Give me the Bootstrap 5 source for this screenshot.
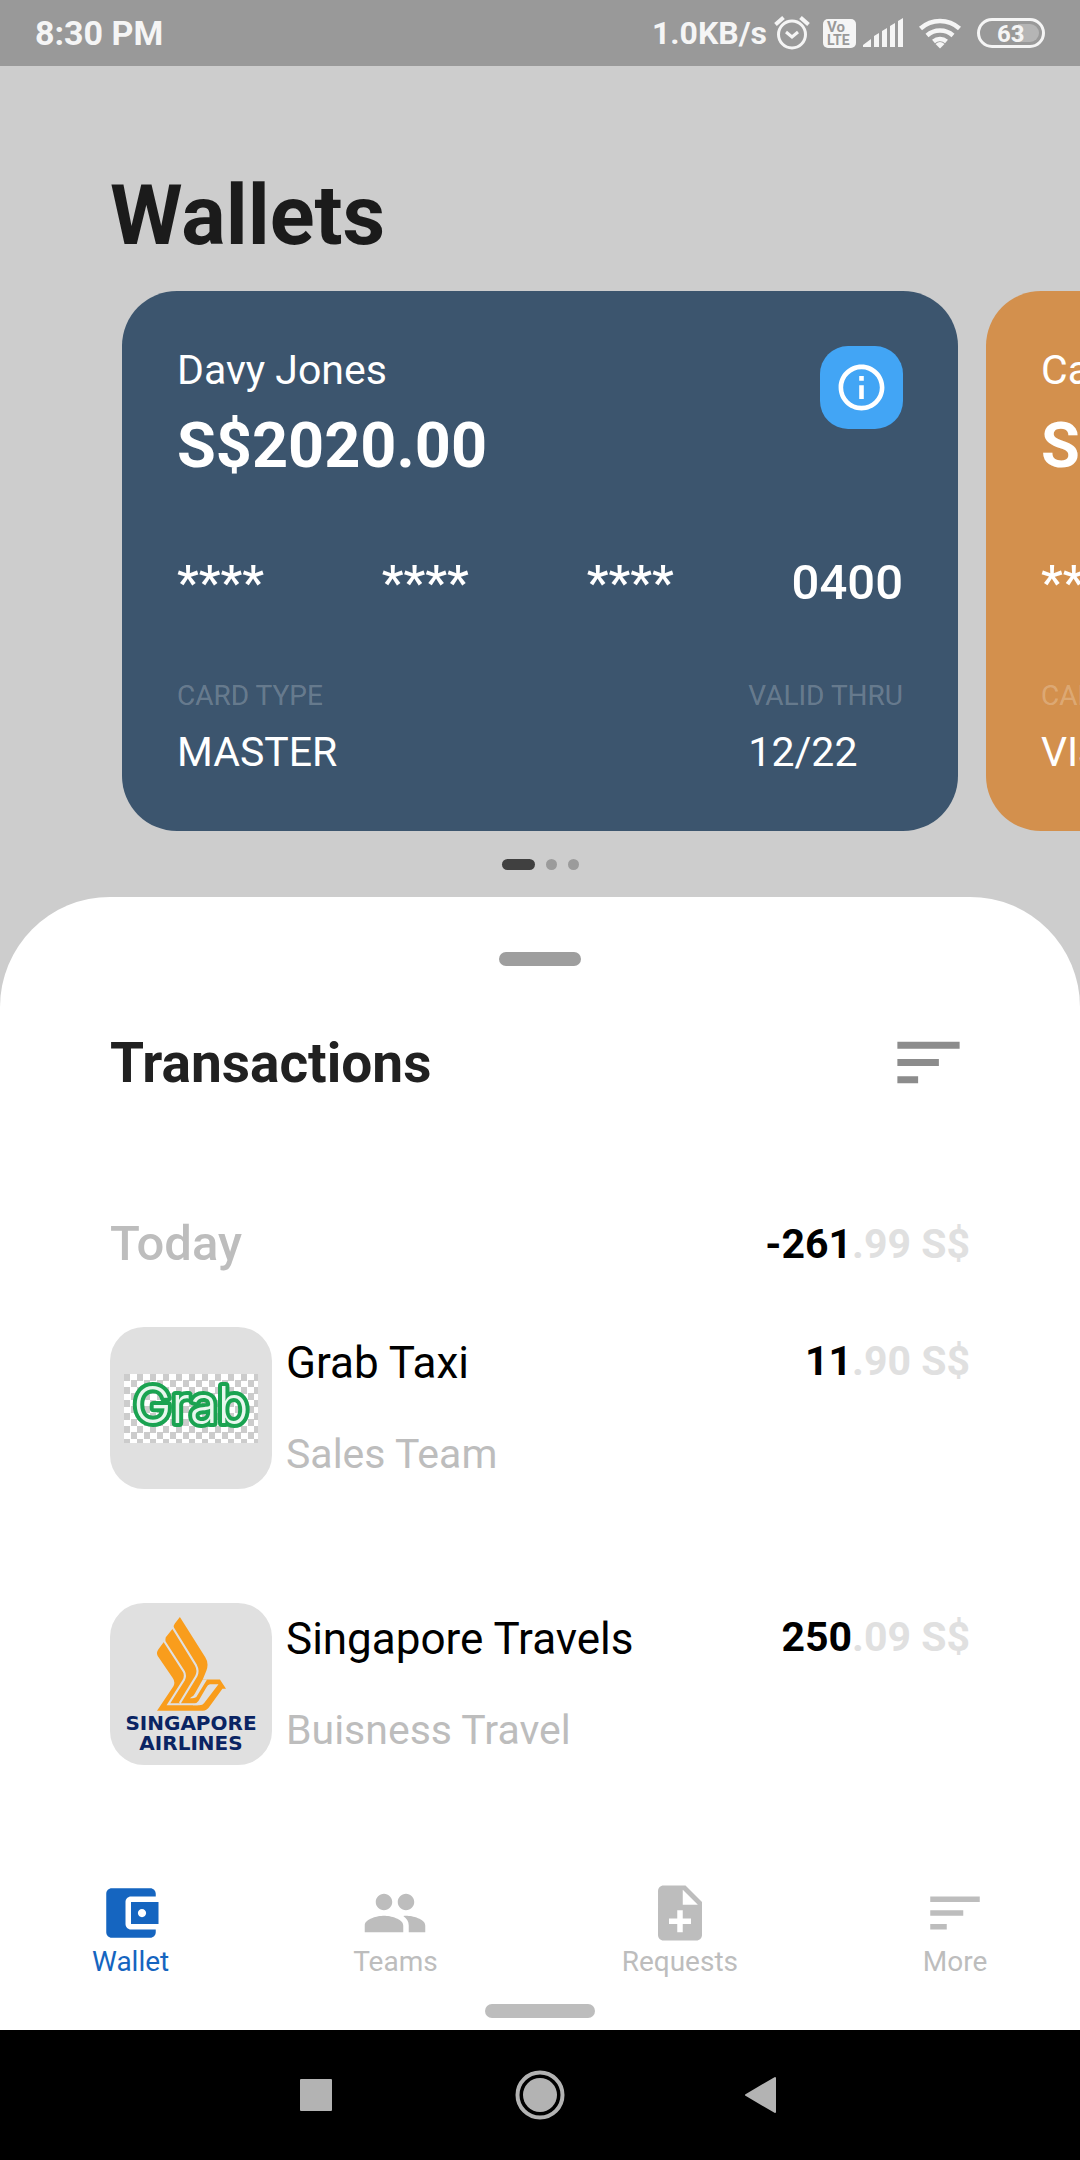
<!DOCTYPE html>
<html lang="en">
<head>
<meta charset="utf-8">
<meta name="viewport" content="width=device-width, initial-scale=1">
<title>Wallets</title>
<link rel="stylesheet" href="https://cdn.jsdelivr.net/npm/bootstrap@5.3.0/dist/css/bootstrap.min.css">
<style>
body{font-family:Roboto,"Noto Sans",sans-serif;background:#cdcdcd;color:#000}
.status{height:66px;background:#999;color:#f5f5f5;padding:0 35px;font-weight:700}
.clock{font-size:34px;line-height:40px}
.speed{font-size:32px;line-height:40px}
.page-title{font-size:83px;line-height:98px;font-weight:700;color:#1b1b1b;margin:101px 110px 26px}
.wallets{gap:28px;padding-left:122px;overflow:hidden}
.wallet{flex:0 0 836px;max-width:836px;padding:55px;border-radius:55px;background:#3c556e;color:#fff}
.wallet-alt{background:#d3904d}
.t41{font-size:41px;line-height:48px}
.t28{font-size:28px;line-height:32px}
.t49{font-size:49px;line-height:58px;font-weight:500}
.balance{font-size:63px;line-height:72px;font-weight:700;margin-top:16px}
.digits{margin-top:72px}
.meta{margin-top:68px}
.meta .t28{color:rgba(255,255,255,.24)}
.meta .t41{margin-top:16px}
.info-btn{width:83px;height:83px;border-radius:28px;background:#42a5f5;color:#fff}
.info-btn:hover{background:#42a5f5;color:#fff}
.dots{gap:11px;margin:28px 0 27px}
.dots button{width:11px;height:11px;border:0;padding:0;border-radius:6px;background:#9b9b9b}
.dots .on{width:33px;background:#404040}
.sheet{background:#fff;border-radius:110px 110px 0 0;padding-top:55px}
.grip{width:82px;height:14px;border-radius:7px;background:#9e9e9e}
.inner{padding:0 110px}
.sheet h2{font-size:55px;line-height:64px;font-weight:700;color:#212121}
.sort-row{margin-top:55px}
.sort-btn{color:#8c8c8c}
.day{margin-top:111px;color:#bdbdbd}
.amount{font-weight:700;color:#000}
.cents{color:#e0e0e0}
.txs{margin-top:54px;gap:114px}
.tx{gap:14px}
.logo{flex:0 0 162px;height:162px;border-radius:34px;background:#e0e0e0}
.tx-body{padding-top:10px}
.tx-name{font-size:44px;line-height:52px}
.tx-team{color:#bdbdbd;margin-top:41px}
.checks{width:134px;height:69px;background:repeating-conic-gradient(#fff 0 25%,#ccc 0 50%) 0 0/13px 13px}
.checks svg{display:block}
.sia{font-family:"DejaVu Sans",sans-serif;font-weight:700;font-size:20px;line-height:20px;color:#0a2463;padding-top:14px}
.sia svg{margin-bottom:2px}
.tabs{padding-top:115px}
.tabs a{color:#bdbdbd;text-decoration:none}
.tabs a.active{color:#1565c0}
.home-bar{width:110px;height:14px;border-radius:7px;background:#bdbdbd;margin:26px auto 12px}
.sysnav{height:130px;background:#000}
.sysnav button{color:#b3b3b3;width:215px}
</style>
</head>
<body>
<div class="d-flex flex-column min-vh-100 overflow-hidden">
<div class="status d-flex justify-content-between align-items-center">
  <span class="clock">8:30 PM</span>
  <div class="d-flex align-items-center">
    <span class="speed">1.0KB/s</span>
    <svg width="278" height="66" viewBox="767 0 278 66" fill="none" stroke="#f5f5f5" aria-hidden="true">
      <circle cx="792" cy="34.500" r="13.500" stroke-width="3"/>
      <path d="M786 32l6 5 6-5" stroke-width="3"/>
      <path d="M775.500 24.500l8-7M808.500 24.500l-8-7" stroke-width="4"/>
      <rect x="823" y="19" width="33" height="29" rx="5" fill="#f5f5f5" stroke="none"/>
      <g fill="#999" stroke="none" font-family="Roboto,sans-serif" font-weight="700"><text x="827" y="32" font-size="15">Vo</text><text x="827" y="45" font-size="14">LTE</text></g>
      <path fill="#f5f5f5" stroke="none" d="M863 47v-2l8-6v8zM874 36l5-3v14h-5zM882 31l5-3v19h-5zM890 26l5-3v24h-5zM898 21l5-3v29h-5z"/>
      <path d="M920.500 28.500a29 29 0 0 1 39 0M927 35.500a19.500 19.500 0 0 1 26 0M933.500 41.500a10 10 0 0 1 13 0" stroke-width="4.500"/>
      <path fill="#f5f5f5" stroke="none" d="M935.500 44q4.500-4 9 0l-4.500 4.500z"/>
      <path d="M1018 24h12a9 9 0 0 1 0 18h-12z" fill="#b5b5b5" stroke="none"/>
      <rect x="978.500" y="19.500" width="65" height="27" rx="13.500" stroke-width="3"/>
      <text x="997" y="42" font-size="24" font-weight="700" fill="#f5f5f5" stroke="none" font-family="Roboto,sans-serif">63</text>
    </svg>
  </div>
</div>

<header><h1 class="page-title">Wallets</h1></header>

<section class="wallets d-flex">
  <article class="wallet">
    <div class="d-flex justify-content-between align-items-start">
      <div><div class="t41">Davy Jones</div><div class="balance">S$2020.00</div></div>
      <button class="btn info-btn p-0 border-0 d-flex align-items-center justify-content-center" aria-label="Card info">
        <svg width="55" height="55" viewBox="0 0 24 24" fill="currentColor"><path d="M11 7h2v2h-2zm0 4h2v6h-2zm1-9C6.480 2 2 6.480 2 12s4.480 10 10 10 10-4.480 10-10S17.520 2 12 2zm0 18c-4.410 0-8-3.590-8-8s3.590-8 8-8 8 3.590 8 8-3.590 8-8 8z"/></svg>
      </button>
    </div>
    <div class="digits t49 d-flex justify-content-between"><span>****</span><span>****</span><span>****</span><span>0400</span></div>
    <div class="meta d-flex justify-content-between">
      <div><div class="t28">CARD TYPE</div><div class="t41">MASTER</div></div>
      <div><div class="t28">VALID THRU</div><div class="t41">12/22</div></div>
    </div>
  </article>
  <article class="wallet wallet-alt">
    <div class="t41">Calypso</div><div class="balance">S$2020.00</div>
    <div class="digits t49 d-flex justify-content-between"><span>****</span><span>****</span><span>****</span><span>0400</span></div>
    <div class="meta"><div class="t28">CARD TYPE</div><div class="t41">VISA</div></div>
  </article>
</section>
<div class="dots d-flex justify-content-center">
  <button class="on" aria-label="Wallet 1"></button><button aria-label="Wallet 2"></button><button aria-label="Wallet 3"></button>
</div>

<main class="sheet flex-grow-1 d-flex flex-column">
  <div class="grip mx-auto"></div>
  <div class="inner">
    <div class="sort-row d-flex justify-content-between align-items-center">
      <h2 class="m-0">Transactions</h2>
      <button class="btn sort-btn p-0 border-0 d-flex" aria-label="Sort"><svg width="83" height="83" viewBox="0 0 24 24" fill="currentColor"><path d="M3 18h6v-2H3v2zM3 6v2h18V6H3zm0 7h12v-2H3v2z"/></svg></button>
    </div>
    <div class="day d-flex justify-content-between align-items-center">
      <div class="t49">Today</div>
      <div class="amount t41">-261<span class="cents">.99 S$</span></div>
    </div>
    <div class="txs d-flex flex-column">
      <div class="tx d-flex">
        <div class="logo d-flex align-items-center justify-content-center">
          <div class="checks"><svg width="134" height="69" viewBox="0 0 134 69" role="img" aria-label="Grab"><text x="67" y="49" text-anchor="middle" font-family="Inter,sans-serif" font-size="51" font-weight="300" fill="#e8f7ee" stroke="#1aa351" stroke-width="8" stroke-linejoin="round" paint-order="stroke">Grab</text></svg></div>
        </div>
        <div class="tx-body flex-grow-1 d-flex justify-content-between align-items-start">
          <div><div class="tx-name">Grab Taxi</div><div class="tx-team t41">Sales Team</div></div>
          <div class="amount t41">11<span class="cents">.90 S$</span></div>
        </div>
      </div>
      <div class="tx d-flex">
        <div class="logo sia d-flex flex-column align-items-center">
          <svg width="69" height="94" viewBox="158 80 193 280" preserveAspectRatio="none" aria-hidden="true">
            <path fill="#f99d1c" d="M222 80L293 200Q304 218 296 240L286 266H334L351 294H341L306 345Q298 359 286 359H158L204 286Q210 274 202 262L160 196Q155 186 162 176L176 156L182 150Q180 142 186 136L200 117L205 112Q203 106 208 99z"/>
            <path fill="none" stroke="#e0e0e0" stroke-width="6" d="M201 110L267 224Q275 240 268 256L222 336M177 150L233 242Q239 254 233 268L190 340H272"/>
            <path fill="#e0e0e0" d="M306 280H330L290 336Q286 343 276 343H258Q268 338 274 330L296 290Q300 281 306 280zM286 266H298L268 318Q264 322 250 322L256 317Q260 316 264 308z"/>
          </svg>
          <div>SINGAPORE</div><div>AIRLINES</div>
        </div>
        <div class="tx-body flex-grow-1 d-flex justify-content-between align-items-start">
          <div><div class="tx-name">Singapore Travels</div><div class="tx-team t41">Buisness Travel</div></div>
          <div class="amount t41">250<span class="cents">.09 S$</span></div>
        </div>
      </div>
    </div>
  </div>
  <nav class="tabs mt-auto d-flex justify-content-around">
    <a href="#" class="active t28 d-flex flex-column align-items-center"><svg width="66" height="66" viewBox="0 0 24 24" fill="currentColor"><path d="M21 18v1c0 1.100-.9 2-2 2H5c-1.110 0-2-.9-2-2V5c0-1.100.89-2 2-2h14c1.100 0 2 .9 2 2v1h-9c-1.110 0-2 .9-2 2v8c0 1.100.89 2 2 2h9zm-9-2h10V8H12v8zm4-2.500c-.83 0-1.500-.67-1.500-1.500s.67-1.500 1.500-1.500 1.500.67 1.500 1.500-.67 1.500-1.500 1.500z"/></svg>Wallet</a>
    <a href="#" class="t28 d-flex flex-column align-items-center"><svg width="66" height="66" viewBox="0 0 24 24" fill="currentColor"><path d="M16 11c1.660 0 2.990-1.340 2.990-3S17.660 5 16 5c-1.660 0-3 1.340-3 3s1.340 3 3 3zm-8 0c1.660 0 2.990-1.340 2.990-3S9.660 5 8 5C6.340 5 5 6.340 5 8s1.340 3 3 3zm0 2c-2.330 0-7 1.170-7 3.500V19h14v-2.500c0-2.330-4.670-3.500-7-3.500zm8 0c-.29 0-.62.020-.97.050 1.160.84 1.970 1.970 1.970 3.450V19h6v-2.500c0-2.330-4.670-3.500-7-3.500z"/></svg>Teams</a>
    <a href="#" class="t28 d-flex flex-column align-items-center"><svg width="66" height="66" viewBox="0 0 24 24" fill="currentColor"><path d="M14 2H6c-1.100 0-1.990.9-1.990 2L4 20c0 1.100.89 2 1.990 2H18c1.100 0 2-.9 2-2V8l-6-6zm2 14h-3v3h-2v-3H8v-2h3v-3h2v3h3v2zm-3-7V3.500L18.500 9H13z"/></svg>Requests</a>
    <a href="#" class="t28 d-flex flex-column align-items-center"><svg width="66" height="66" viewBox="0 0 24 24" fill="currentColor"><path d="M3 18h6v-2H3v2zM3 6v2h18V6H3zm0 7h12v-2H3v2z"/></svg>More</a>
  </nav>
  <div class="home-bar"></div>
</main>
<div class="sysnav d-flex justify-content-center align-items-center">
  <button class="btn p-0 border-0" aria-label="Recent apps"><svg width="50" height="50" viewBox="0 0 50 50" fill="currentColor"><rect x="0" y="9" width="32" height="32" rx="1"/></svg></button>
  <button class="btn p-0 border-0" aria-label="Home"><svg width="50" height="50" viewBox="0 0 50 50"><circle cx="25" cy="25" r="22.500" fill="none" stroke="currentColor" stroke-width="4"/><circle cx="25" cy="25" r="17" fill="currentColor"/></svg></button>
  <button class="btn p-0 border-0" aria-label="Back"><svg width="50" height="50" viewBox="0 0 50 50" fill="currentColor" stroke="currentColor" stroke-width="2" stroke-linejoin="round"><path d="M45 8v34L16 25z"/></svg></button>
</div>
</div>
<script src="https://cdn.jsdelivr.net/npm/bootstrap@5.3.0/dist/js/bootstrap.bundle.min.js"></script>
</body>
</html>
